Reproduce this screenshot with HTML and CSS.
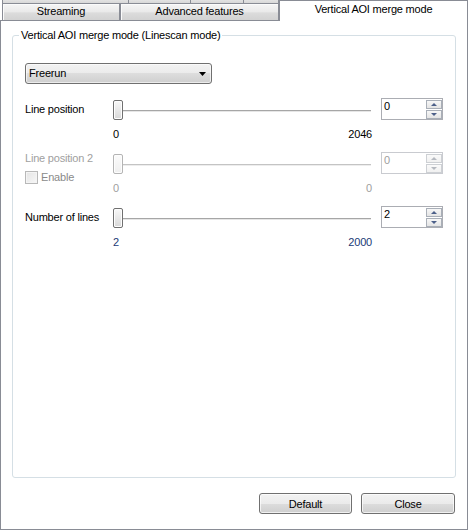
FILE: index.html
```html
<!DOCTYPE html>
<html>
<head>
<meta charset="utf-8">
<link rel="stylesheet" href="styles.css">
</head>
<body>
<div class="window">
  <div class="tabstrip">
    <div class="tabs-back">
      <div class="tabrow-top">
        <div class="stub stub-1"></div>
        <div class="stub stub-2"></div>
        <div class="stub stub-3"></div>
        <div class="stub stub-4"></div>
      </div>
      <div class="tabrow-main">
        <div class="tab tab-streaming">Streaming</div>
        <div class="tab tab-advanced">Advanced features</div>
      </div>
    </div>
    <div class="tab-active">Vertical AOI merge mode</div>
  </div>
  <div class="panel">
    <fieldset class="group">
      <legend>Vertical AOI merge mode (Linescan mode)</legend>
      <div class="combo">
        <span>Freerun</span>
        <svg class="combo-arrow" width="7" height="4" viewBox="0 0 7 4"><path d="M0 0H7L3.5 4Z" fill="#000"/></svg>
      </div>

      <div class="srow">
        <div class="label">Line position</div>
        <div class="slider"><div class="thumb"></div><div class="track"></div></div>
        <div class="spin">
          <div class="spin-value">0</div>
          <div class="spin-btns">
            <div class="spin-btn"><span class="arr-up"></span></div>
            <div class="spin-btn"><span class="arr-down"></span></div>
          </div>
        </div>
        <div class="scale"><span>0</span><span>2046</span></div>
      </div>

      <div class="srow disabled">
        <div class="label-stack">
          <div>Line position 2</div>
          <div class="check-row"><span class="cb"></span><span class="cb-text">Enable</span></div>
        </div>
        <div class="slider"><div class="thumb"></div><div class="track"></div></div>
        <div class="spin">
          <div class="spin-value">0</div>
          <div class="spin-btns">
            <div class="spin-btn"><span class="arr-up"></span></div>
            <div class="spin-btn"><span class="arr-down"></span></div>
          </div>
        </div>
        <div class="scale"><span>0</span><span>0</span></div>
      </div>

      <div class="srow">
        <div class="label">Number of lines</div>
        <div class="slider"><div class="thumb"></div><div class="track"></div></div>
        <div class="spin">
          <div class="spin-value">2</div>
          <div class="spin-btns">
            <div class="spin-btn"><span class="arr-up"></span></div>
            <div class="spin-btn"><span class="arr-down"></span></div>
          </div>
        </div>
        <div class="scale scale-blue"><span>2</span><span>2000</span></div>
      </div>
    </fieldset>
    <div class="buttons">
      <button class="btn btn-default">Default</button>
      <button class="btn btn-close">Close</button>
    </div>
  </div>
</div>
</body>
</html>
```
FILE: styles.css
```css
* { box-sizing: border-box; }
html, body { margin: 0; padding: 0; background: #fff; }
body {
  font-family: "Liberation Sans", Arial, sans-serif;
  font-size: 11px;
  line-height: 13px;
  color: #000;
  letter-spacing: -0.2px;
}
.window {
  width: 468px;
  height: 530px;
  display: flex;
  flex-direction: column;
  background: #fff;
}
.tabstrip { display: flex; height: 21px; flex: none; }
.tabs-back { width: 279px; display: flex; flex-direction: column; }
.tabrow-top { height: 3px; display: flex; padding-left: 2px; }
.stub {
  height: 3px;
  border-left: 1px solid #898c95;
  background: linear-gradient(#e2e2e2, #d8d8d8);
}
.stub-1 { width: 126px; }
.stub-2 { width: 62px; }
.stub-3 { width: 53px; }
.stub-4 { width: 36px; border-right: 1px solid #898c95; }
.tabrow-main {
  height: 18px;
  display: flex;
  padding-left: 2px;
  border-bottom: 1px solid #898c95;
}
.tab {
  height: 17px;
  border: 1px solid #898c95;
  border-bottom: none;
  background: linear-gradient(#f5f5f5, #e9e9e9 50%, #dcdcdc 55%, #d2d2d2);
  box-shadow: inset 1px 1px 0 #fbfbfb;
  text-align: center;
  padding-top: 1px;
}
.tab-streaming { width: 118px; }
.tab-advanced { width: 159px; }
.tab-active {
  width: 189px;
  height: 21px;
  border: 1px solid #898c95;
  border-bottom: none;
  background: #fff;
  text-align: center;
  padding-top: 2px;
}
.panel {
  flex: 1;
  border: 1px solid #898c95;
  border-top: none;
  display: flex;
  flex-direction: column;
}
.group {
  margin: 8px 11px 0;
  padding: 21px 12px 0;
  border: 1px solid #d5dfe5;
  border-radius: 3px;
  height: 449px;
  min-width: 0;
}
.group legend {
  padding: 0 2px;
  margin-left: -6px;
}
.combo {
  width: 187px;
  height: 21px;
  border: 1px solid #707070;
  border-radius: 3px;
  background: linear-gradient(#f2f2f2, #ebebeb 50%, #dddddd 50%, #cfcfcf);
  box-shadow: inset 0 0 0 1px rgba(255,255,255,0.6);
  display: flex;
  align-items: center;
  justify-content: space-between;
  padding: 0 5px 0 3px;
  margin-bottom: 14px;
}
.combo-arrow { display: block; }
.srow {
  display: grid;
  grid-template-columns: 88px 259px 71px;
  grid-template-rows: 23px 13px;
  row-gap: 7px;
  margin-bottom: 11px;
}
.label { grid-column: 1; grid-row: 1; align-self: center; }
.label-stack { grid-column: 1; grid-row: 1 / span 2; align-self: start; color: #a0a0a0; }
.check-row { display: flex; align-items: center; margin-top: 6px; }
.cb {
  width: 13px;
  height: 13px;
  border: 1px solid #b8b8b8;
  background: linear-gradient(135deg, #e4e4e4, #f7f7f7);
  box-shadow: inset 0 0 0 1px #f4f4f4;
  margin-right: 3px;
}
.cb-text { color: #8a8a8a; }
.slider { grid-column: 2; grid-row: 1; display: flex; align-items: flex-start; }
.thumb {
  flex: none;
  width: 10px;
  height: 20px;
  margin-top: 2px;
  border: 1px solid #707070;
  border-radius: 2px;
  background: linear-gradient(#f8f8f8, #e8e8e8 50%, #d8d8d8);
  box-shadow: inset 0 0 0 1px #fdfdfd;
}
.track {
  flex: 1;
  height: 2px;
  margin-top: 12px;
  margin-right: 1px;
  border-top: 1px solid #a6a6a6;
  background: #e6e6e6;
}
.spin {
  grid-column: 3;
  grid-row: 1;
  margin-left: 9px;
  width: 62px;
  height: 22px;
  border: 1px solid #abadb3;
  background: #fff;
  display: flex;
}
.spin-value { flex: 1; padding: 1px 0 0 2px; }
.spin-btns {
  width: 16px;
  display: flex;
  flex-direction: column;
  gap: 1px;
  padding-top: 1px;
}
.spin-btn {
  height: 9px;
  border: 1px solid #a9afb8;
  background: linear-gradient(#f7f7f7, #e4e4e4);
  display: flex;
  align-items: center;
  justify-content: center;
}
.arr-up, .arr-down { width: 0; height: 0; border-left: 3px solid transparent; border-right: 3px solid transparent; }
.arr-up { border-bottom: 3px solid #4d6089; }
.arr-down { border-top: 3px solid #4d6089; }
.scale {
  grid-column: 2;
  grid-row: 2;
  display: flex;
  justify-content: space-between;
}
.scale-blue { color: #1a3a76; }
.disabled .thumb { border-color: #b4b4b4; background: linear-gradient(#fbfbfb, #efefef); }
.disabled .track { border-top-color: #c4c4c4; background: #ededed; }
.disabled .spin { border-color: #c9cbd0; }
.disabled .spin-value { color: #a0a0a0; }
.disabled .spin-btn { border-color: #cdd0d4; background: linear-gradient(#fafafa, #f0f0f0); }
.disabled .arr-up { border-bottom-color: #b5b9c0; }
.disabled .arr-down { border-top-color: #b5b9c0; }
.disabled .scale { color: #a0a0a0; }
.buttons {
  display: flex;
  justify-content: flex-end;
  gap: 9px;
  margin: 15px 12px 0 0;
}
.btn {
  height: 21px;
  padding: 0;
  border: 1px solid #707070;
  border-radius: 3px;
  background: linear-gradient(#f2f2f2, #ebebeb 50%, #dddddd 50%, #cfcfcf);
  box-shadow: inset 0 0 0 1px rgba(255,255,255,0.7);
  font-family: inherit;
  font-size: 11px;
  letter-spacing: -0.2px;
  color: #000;
}
.btn-default { width: 93px; }
.btn-close { width: 94px; }
```
